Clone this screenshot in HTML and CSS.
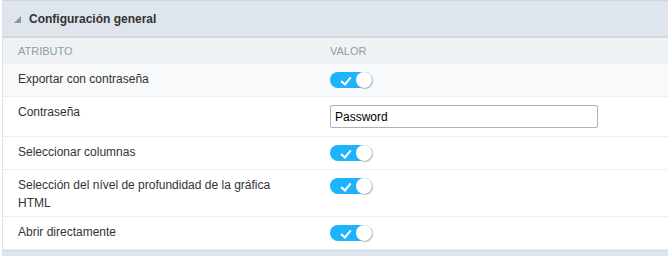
FILE: index.html
```html
<!DOCTYPE html>
<html>
	<head>
		<meta charset="utf-8">
		<title>Configuración general</title>
		<link rel="stylesheet" href="styles.css">
	</head>
	<body>
		<div class="panel">
			<div class="panel-head">
				<span class="arrow"></span>
				<span class="title">Configuración general</span>
			</div>
			<table class="props">
				<thead>
					<tr>
						<th class="col-attr">Atributo</th>
						<th class="col-val">Valor</th>
					</tr>
				</thead>
				<tbody>
					<tr class="hover">
						<td class="attr">Exportar con contraseña</td>
						<td class="val"><span class="toggle"></span></td>
					</tr>
					<tr>
						<td class="attr">Contraseña</td>
						<td class="val"><input class="field" type="text" value="Password" /></td>
					</tr>
					<tr>
						<td class="attr">Seleccionar columnas</td>
						<td class="val"><span class="toggle"></span></td>
					</tr>
					<tr>
						<td class="attr">Selección del nível de profundidad de la gráfica HTML</td>
						<td class="val"><span class="toggle"></span></td>
					</tr>
					<tr>
						<td class="attr">Abrir directamente</td>
						<td class="val"><span class="toggle"></span></td>
					</tr>
				</tbody>
			</table>
			<div class="panel-foot"></div>
		</div>
	</body>
</html>
```

FILE: styles.css
```css
  html,body{
	  margin: 0;
	  padding: 0;
	  background: #ffffff;
	  overflow: hidden;
  }
  body{
	  padding-left: 2px;
	  font-family: "Liberation Sans", Arial, sans-serif;
	  color: #333333;
  }
  .panel{
	  border-left: #dbe2e9 solid 1px;
	  border-top: #cdd6df solid 1px;
  }
  .panel-head{
	  height: 35px;
	  background: #dfe5ec;
	  border-bottom: #cfd9e2 solid 2px;
	  display: flex;
	  align-items: center;
	  padding-left: 11px;
  }
  .arrow{
	  width: 0;
	  height: 0;
	  border-style: solid;
	  border-width: 0 0 7px 7px;
	  border-color: transparent transparent #8796a3 transparent;
	  margin-top: 2px;
	  margin-right: 8px;
  }
  .title{
	  font-size: 12px;
	  font-weight: bold;
	  color: #333333;
  }

  .props{
	  width: 100%;
	  border-collapse: collapse;
  }
  .props th{
	  background: #eef2f5;
	  height: 26px;
	  font-size: 11px;
	  font-weight: normal;
	  color: #8d9dab;
	  text-transform: uppercase;
	  text-align: left;
	  padding: 0;
	  vertical-align: middle;
  }
  .props th.col-attr{
	  width: 304px;
	  padding-left: 15px;
  }
  .props th.col-val{
	  padding-left: 8px;
  }
  .props td{
	  border-bottom: #eceff3 solid 1px;
	  vertical-align: top;
  }
  .props tr.hover td{
	  background: #f7f9fb;
  }
  .props td.attr{
	  font-size: 12px;
	  line-height: 18px;
	  padding: 6px 16px 4px 15px;
  }
  .props td.val{
	  padding: 8px 8px 8px 8px;
  }

  .toggle{
	  display: block;
	  position: relative;
	  width: 42px;
	  height: 16px;
	  border-radius: 8px;
	  background: #1eb3fb;
  }
  .toggle:before{
	  content: "";
	  position: absolute;
	  left: 13px;
	  top: 3px;
	  width: 4px;
	  height: 8px;
	  border-right: #ffffff solid 2px;
	  border-bottom: #ffffff solid 2px;
	  transform: rotate(40deg);
  }
  .toggle:after{
	  content: "";
	  position: absolute;
	  right: 0;
	  top: 0;
	  width: 16px;
	  height: 16px;
	  border-radius: 50%;
	  background: #ffffff;
	  box-shadow: 1px 1px 1px rgba(0,0,0,0.25);
  }

  .field{
	  display: block;
	  box-sizing: border-box;
	  width: 268px;
	  height: 23px;
	  margin: 0;
	  padding: 0 4px;
	  border: #a8b1bd solid 1px;
	  border-radius: 2px;
	  font-family: "Liberation Sans", Arial, sans-serif;
	  font-size: 12px;
	  color: #000000;
	  background: #ffffff;
  }

  .panel-foot{
	  height: 8px;
	  background: #dfe5ec;
	  border-top: #d3dce4 solid 1px;
  }
```
